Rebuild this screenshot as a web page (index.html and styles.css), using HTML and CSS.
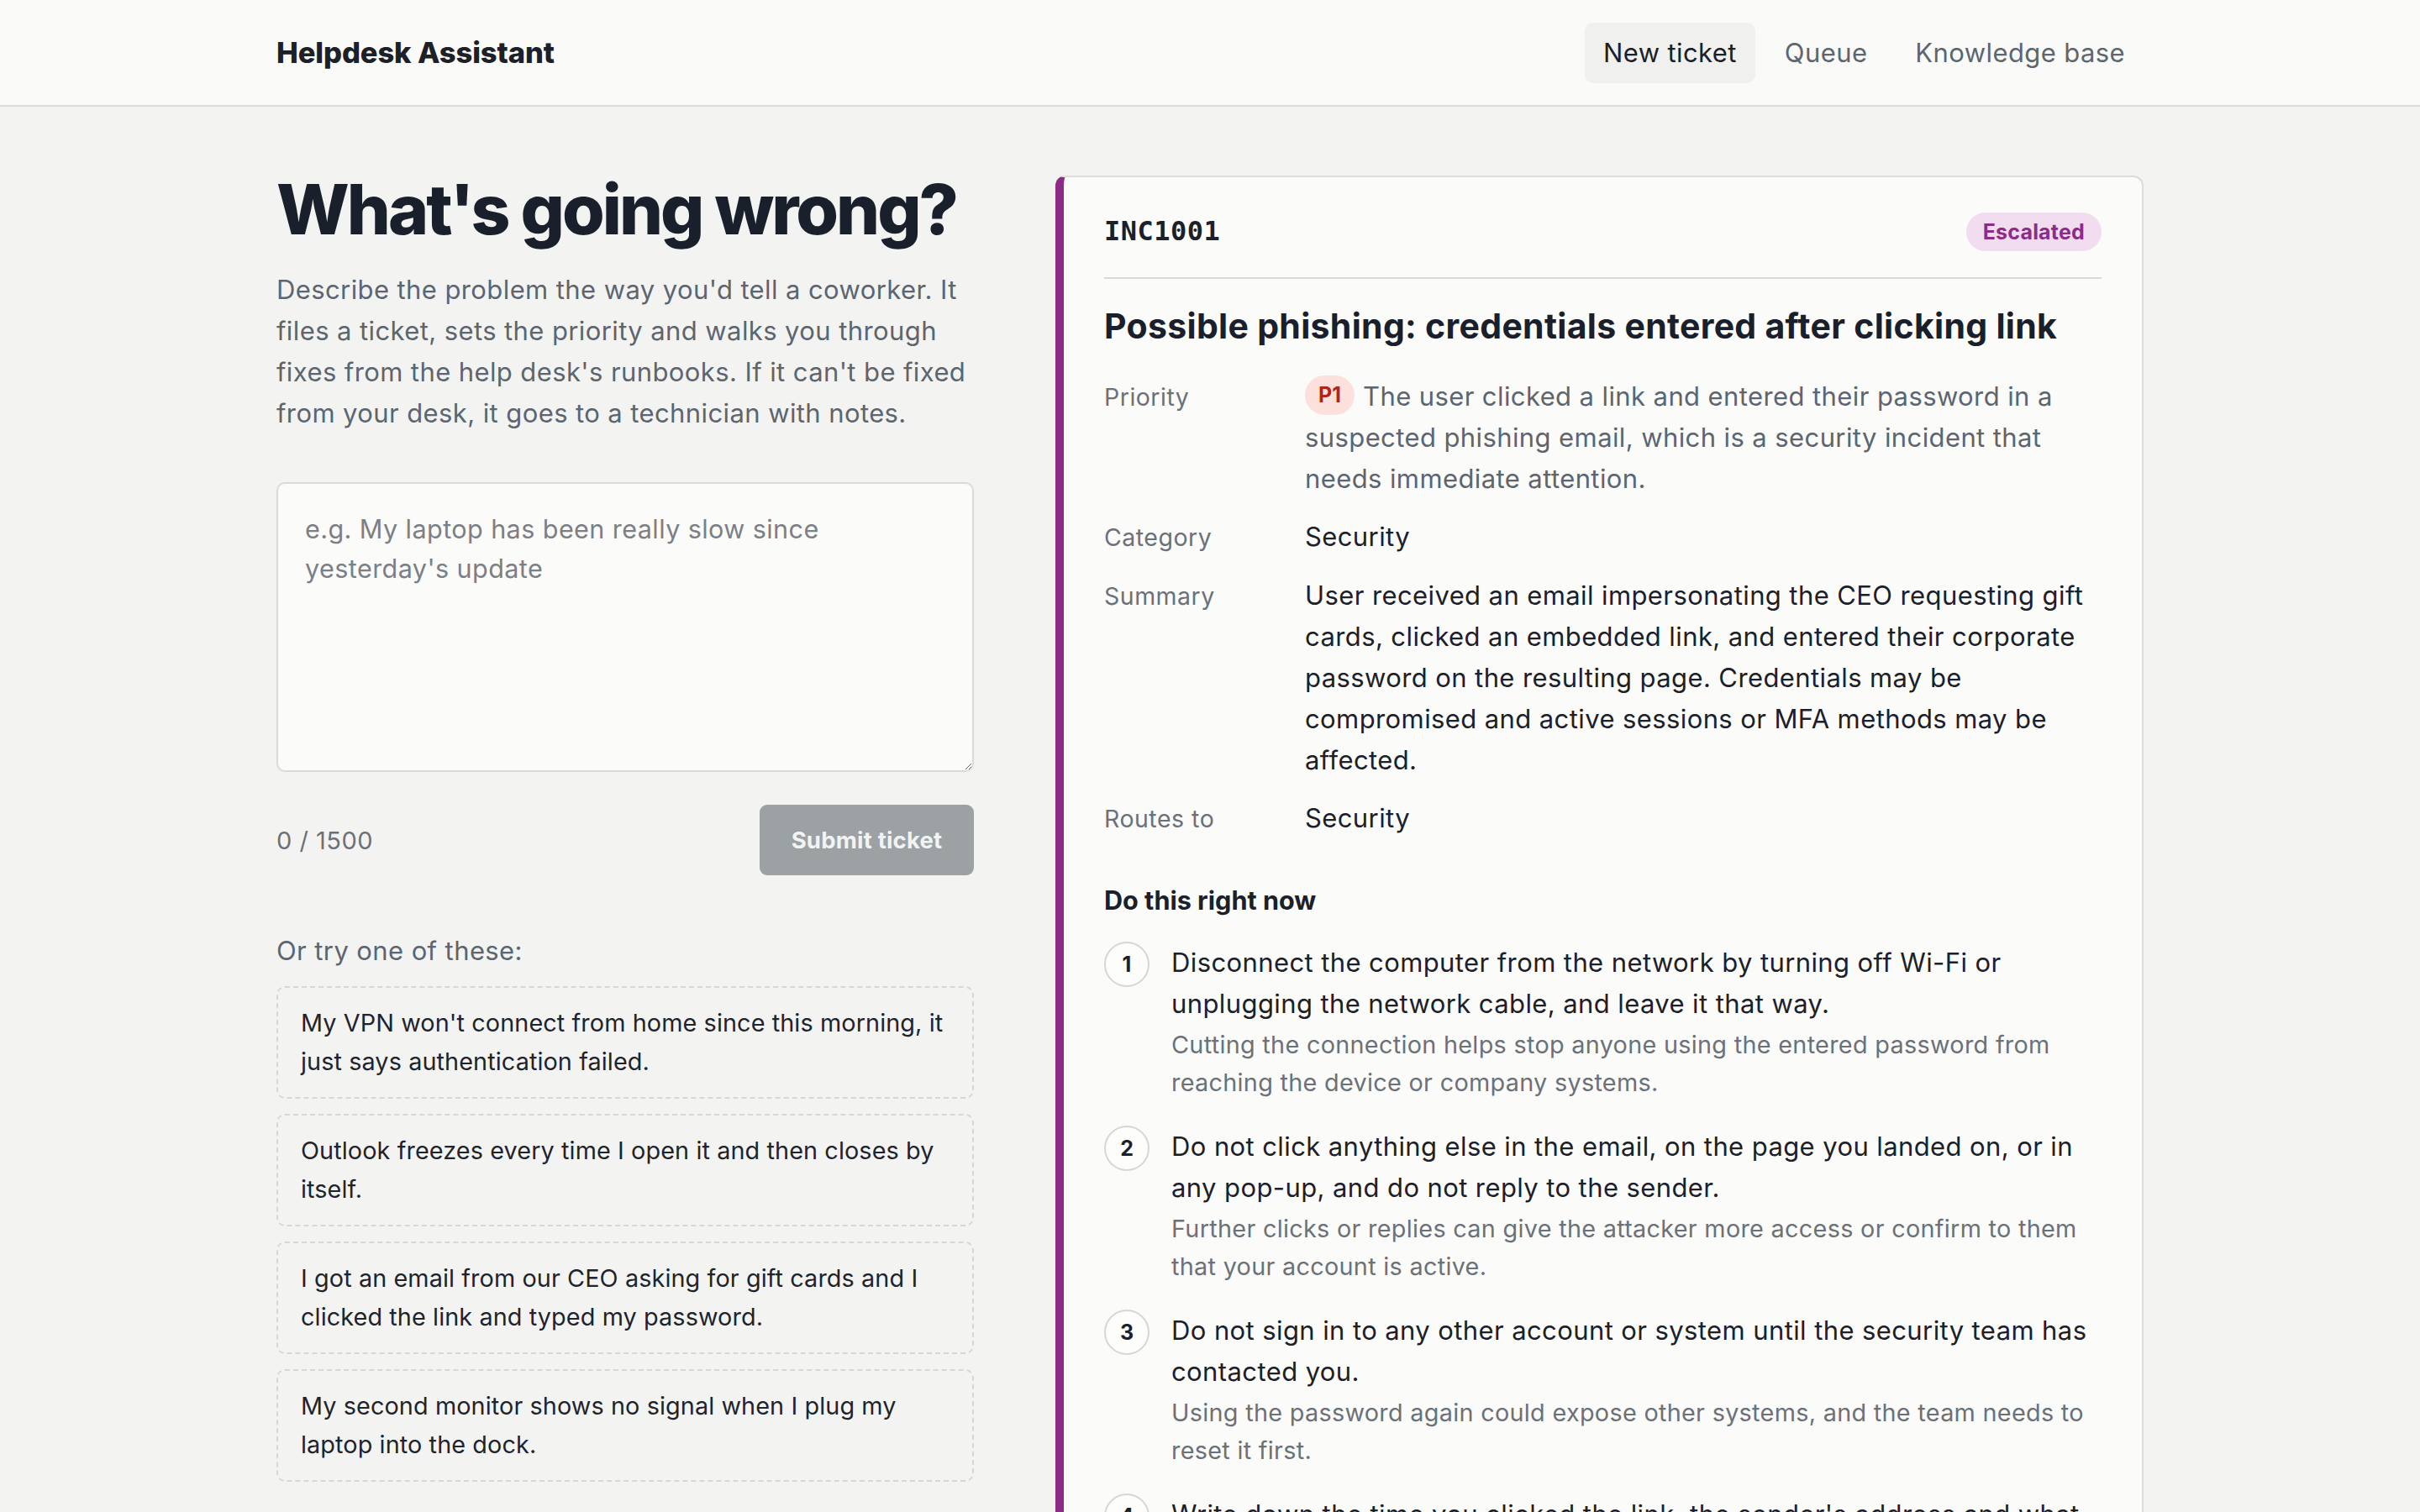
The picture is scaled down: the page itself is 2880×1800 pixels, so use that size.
FILE: index.html
```html
<!DOCTYPE html>
<html lang="en">
  <head>
    <meta charset="UTF-8" />
    <meta name="viewport" content="width=device-width, initial-scale=1.0" />
    <title>Helpdesk Assistant</title>
    <link rel="stylesheet" href="styles.css">
  </head>
  <body>
    <header class="topbar">
      <div class="topbar-inner">
        <span class="brand">Helpdesk Assistant</span>
        <nav class="nav">
          <a class="nav-link active">New ticket</a>
          <a class="nav-link">Queue</a>
          <a class="nav-link">Knowledge base</a>
        </nav>
      </div>
    </header>

    <main class="page">
      <section class="intake">
        <h1>What's going wrong?</h1>
        <p class="lead">
          Describe the problem the way you'd tell a coworker. It files a ticket, sets the priority and walks you
          through fixes from the help desk's runbooks. If it can't be fixed from your desk, it goes to a technician
          with notes.
        </p>

        <textarea class="problem" placeholder="e.g. My laptop has been really slow since yesterday's update"></textarea>

        <div class="actions">
          <span class="counter">0 / 1500</span>
          <button class="submit" disabled>Submit ticket</button>
        </div>

        <p class="try-label">Or try one of these:</p>
        <div class="examples">
          <div class="example">My VPN won't connect from home since this morning, it just says authentication failed.</div>
          <div class="example">Outlook freezes every time I open it and then closes by itself.</div>
          <div class="example">I got an email from our CEO asking for gift cards and I clicked the link and typed my password.</div>
          <div class="example">My second monitor shows no signal when I plug my laptop into the dock.</div>
        </div>
      </section>

      <article class="ticket">
        <div class="ticket-head">
          <span class="ticket-id">INC1001</span>
          <span class="status">Escalated</span>
        </div>

        <h2 class="ticket-title">Possible phishing: credentials entered after clicking link</h2>

        <dl class="fields">
          <dt>Priority</dt>
          <dd class="muted"><span class="prio">P1</span>The user clicked a link and entered their password in a suspected phishing email, which is a security incident that needs immediate attention.</dd>
          <dt>Category</dt>
          <dd>Security</dd>
          <dt>Summary</dt>
          <dd>User received an email impersonating the CEO requesting gift cards, clicked an embedded link, and entered their corporate password on the resulting page. Credentials may be compromised and active sessions or MFA methods may be affected.</dd>
          <dt>Routes to</dt>
          <dd>Security</dd>
        </dl>

        <h3 class="steps-title">Do this right now</h3>
        <ol class="steps">
          <li class="step">
            <span class="step-num">1</span>
            <div>
              <p class="step-text">Disconnect the computer from the network by turning off Wi-Fi or unplugging the network cable, and leave it that way.</p>
              <p class="step-why">Cutting the connection helps stop anyone using the entered password from reaching the device or company systems.</p>
            </div>
          </li>
          <li class="step">
            <span class="step-num">2</span>
            <div>
              <p class="step-text">Do not click anything else in the email, on the page you landed on, or in any pop-up, and do not reply to the sender.</p>
              <p class="step-why">Further clicks or replies can give the attacker more access or confirm to them that your account is active.</p>
            </div>
          </li>
          <li class="step">
            <span class="step-num">3</span>
            <div>
              <p class="step-text">Do not sign in to any other account or system until the security team has contacted you.</p>
              <p class="step-why">Using the password again could expose other systems, and the team needs to reset it first.</p>
            </div>
          </li>
          <li class="step">
            <span class="step-num">4</span>
            <div>
              <p class="step-text">Write down the time you clicked the link, the sender's address and what you typed into the page.</p>
              <p class="step-why">These details help the security team trace the attack and check which accounts were exposed.</p>
            </div>
          </li>
        </ol>
      </article>
    </main>
  </body>
</html>
```

FILE: styles.css
```css
* {
  box-sizing: border-box;
  margin: 0;
  padding: 0;
}
body {
  background: #f3f4f2;
  color: #1b2029;
  font-family: Inter, "Noto Sans", sans-serif;
  font-size: 31px;
  line-height: 49px;
  letter-spacing: 0.4px;
}

/* top bar */
.topbar {
  background: #fafaf8;
  border-bottom: 2px solid #dcdedb;
  height: 127px;
}
.topbar-inner {
  width: 2222px;
  height: 100%;
  margin: 0 auto;
  display: flex;
  align-items: center;
  justify-content: space-between;
}
.brand {
  font-weight: 800;
  font-size: 34.5px;
  letter-spacing: -0.1px;
}
.nav {
  display: flex;
  gap: 13px;
}
.nav-link {
  display: block;
  height: 72px;
  line-height: 72px;
  padding: 0 22px;
  border-radius: 10px;
  font-size: 31px;
  color: #5d6670;
}
.nav-link.active {
  background: #f0f1ef;
  color: #1b2029;
}

/* layout */
.page {
  width: 2222px;
  margin: 0 auto;
  padding: 82px 0 80px;
  display: grid;
  grid-template-columns: 830px 1fr;
  gap: 97px;
  align-items: start;
}

/* left column */
h1 {
  font-weight: 800;
  font-size: 82px;
  line-height: 82px;
  letter-spacing: -3px;
  color: #19202b;
}
.lead {
  margin-top: 29px;
  color: #5c6570;
}
.problem {
  display: block;
  width: 100%;
  height: 345px;
  margin-top: 58px;
  padding: 30px 32px;
  border: 2px solid #d9dbd7;
  border-radius: 10px;
  background: #fbfbf9;
  font-family: inherit;
  font-size: 30.6px;
  letter-spacing: 0.4px;
  line-height: 47px;
  color: #1b2029;
}
.problem::placeholder {
  color: #7b8086;
}
.actions {
  margin-top: 39px;
  display: flex;
  align-items: center;
  justify-content: space-between;
}
.counter {
  font-size: 29px;
  letter-spacing: 0.5px;
  color: #6b7178;
}
.submit {
  width: 255px;
  height: 84px;
  border: 0;
  border-radius: 9px;
  background: #9ca1a4;
  color: #f2f3f3;
  font-family: inherit;
  font-weight: 700;
  font-size: 27.5px;
  letter-spacing: 0.2px;
}
.try-label {
  margin-top: 65px;
  color: #5c6570;
}
.examples {
  margin-top: 18px;
  display: flex;
  flex-direction: column;
  gap: 18px;
}
.example {
  padding: 19px 27px;
  border: 2px dashed #d6d8d4;
  border-radius: 10px;
  font-size: 28.8px;
  letter-spacing: 0.1px;
  line-height: 46px;
  color: #1f242c;
}

/* ticket card */
.ticket {
  background: #fbfbf9;
  border: 2px solid #dcddd9;
  border-left: 10px solid #8d2c87;
  border-radius: 12px;
  padding: 0 48px 40px;
}
.ticket-head {
  display: flex;
  align-items: center;
  justify-content: space-between;
  padding: 40px 0 30px;
  border-bottom: 2px solid #d9dad6;
}
.ticket-id {
  font-family: "DejaVu Sans Mono", "Liberation Mono", monospace;
  font-weight: 700;
  font-size: 32px;
  letter-spacing: 0.5px;
  color: #1b2029;
}
.status {
  height: 46px;
  line-height: 46px;
  padding: 0 20px;
  border-radius: 23px;
  background: #f2dcef;
  color: #8d2c87;
  font-weight: 700;
  font-size: 25px;
  letter-spacing: 0.2px;
}
.ticket-title {
  margin-top: 30px;
  font-size: 41px;
  line-height: 52px;
  font-weight: 700;
  letter-spacing: 0.3px;
  color: #19202b;
}
.fields {
  margin-top: 33px;
  display: grid;
  grid-template-columns: 239px 1fr;
  row-gap: 20px;
  align-items: baseline;
}
.fields dt {
  font-size: 28.5px;
  letter-spacing: 0.5px;
  color: #6b7178;
}
.fields dd.muted {
  color: #5c6570;
}
.prio {
  display: inline-block;
  height: 47px;
  line-height: 47px;
  padding: 0 16px;
  margin-right: 10px;
  border-radius: 24px;
  background: #fbe0dc;
  color: #b42318;
  font-weight: 700;
  font-size: 25px;
  letter-spacing: 0;
  vertical-align: top;
}
.steps-title {
  margin-top: 48px;
  font-size: 30.6px;
  font-weight: 700;
  letter-spacing: 0;
}
.steps {
  list-style: none;
  margin-top: 25px;
  display: flex;
  flex-direction: column;
  gap: 29px;
}
.step {
  display: grid;
  grid-template-columns: 54px 1fr;
  column-gap: 26px;
  align-items: start;
}
.step-num {
  width: 54px;
  height: 54px;
  border: 2px solid #d5d7d3;
  border-radius: 50%;
  background: #fdfdfc;
  display: flex;
  align-items: center;
  justify-content: center;
  font-weight: 700;
  font-size: 25px;
  letter-spacing: 0;
}
.step-why {
  margin-top: 2px;
  font-size: 28.8px;
  letter-spacing: 0.3px;
  line-height: 45px;
  color: #6b7178;
}
```
